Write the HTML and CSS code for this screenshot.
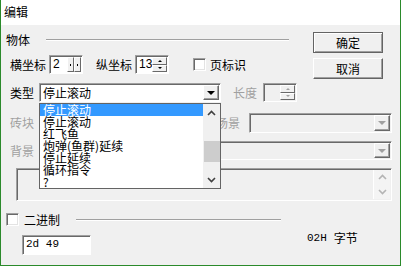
FILE: index.html
```html
<!DOCTYPE html>
<html lang="zh">

<head>
    <meta charset="UTF-8">
    <title>编辑</title>
    <link rel="stylesheet" href="styles.css">
</head>

<body>
    <div class="win">
        <div class="title">编辑</div>
        <div class="client">

            <div class="top">
                <div class="fields">
                    <div class="row row-group">
                        <span class="lbl">物体</span>
                        <span class="rule"></span>
                    </div>

                    <div class="row row-pos">
                        <span class="lbl">横坐标</span>
                        <div class="spin spin-x">
                            <span class="num">2</span>
                            <span class="hbtn"><i></i></span>
                            <span class="hbtn"><i></i></span>
                        </div>
                        <span class="lbl lbl-y">纵坐标</span>
                        <div class="spin spin-y">
                            <span class="num">13</span>
                            <span class="vbtns">
                                <span class="up"><i class="tri-up"></i></span>
                                <span class="down"><i class="tri-down"></i></span>
                            </span>
                        </div>
                        <span class="check check-page"></span>
                        <span class="lbl lbl-page">页标识</span>
                    </div>

                    <div class="row row-type">
                        <span class="lbl">类型</span>
                        <div class="combo combo-type">
                            <span class="val">停止滚动</span>
                            <span class="drop"><i class="tri-down big"></i></span>

                            <div class="list">
                                <div class="items">
                                    <div class="item sel">停止滚动</div>
                                    <div class="item">停止滚动</div>
                                    <div class="item">红飞鱼</div>
                                    <div class="item">炮弹(鱼群)延续</div>
                                    <div class="item">停止延续</div>
                                    <div class="item">循环指令</div>
                                    <div class="item">?</div>
                                </div>
                                <div class="sbar">
                                    <span class="sb-btn">
                                        <svg width="9" height="6" viewBox="0 0 9 6"><polyline points="1,5 4.5,1.5 8,5" fill="none" stroke="#404040" stroke-width="1.6"/></svg>
                                    </span>
                                    <span class="sb-track"><span class="thumb"></span></span>
                                    <span class="sb-btn">
                                        <svg width="9" height="6" viewBox="0 0 9 6"><polyline points="1,1 4.5,4.5 8,1" fill="none" stroke="#404040" stroke-width="1.6"/></svg>
                                    </span>
                                </div>
                            </div>
                        </div>
                        <span class="lbl off lbl-len">长度</span>
                        <div class="spin spin-len">
                            <span class="num"></span>
                            <span class="vbtns">
                                <span class="up"><i class="tri-up off"></i></span>
                                <span class="down"><i class="tri-down off"></i></span>
                            </span>
                        </div>
                    </div>
                </div>

                <div class="actions">
                    <button class="btn btn-default">确定</button>
                    <button class="btn">取消</button>
                </div>
            </div>

            <div class="row row-brick">
                <span class="lbl off">砖块</span>
                <div class="combo combo-off combo-brick"><span class="val"></span><span class="drop"><i class="tri-down big off"></i></span></div>
                <span class="lbl off lbl-scene">场景</span>
                <div class="combo combo-off combo-scene"><span class="val"></span><span class="drop"><i class="tri-down big off"></i></span></div>
            </div>

            <div class="row row-bg">
                <span class="lbl off">背景</span>
                <div class="combo combo-off combo-bg"><span class="val"></span><span class="drop"><i class="tri-down big off"></i></span></div>
            </div>

            <div class="row row-memo">
                <div class="memo">
                    <span class="memo-text"></span>
                    <span class="memo-bar">
                        <span class="mb-btn">
                            <svg width="9" height="6" viewBox="0 0 9 6"><polyline points="1,5 4.5,1.5 8,5" fill="none" stroke="#b4b4b4" stroke-width="1.6"/></svg>
                        </span>
                        <span class="mb-btn">
                            <svg width="9" height="6" viewBox="0 0 9 6"><polyline points="1,1 4.5,4.5 8,1" fill="none" stroke="#b4b4b4" stroke-width="1.6"/></svg>
                        </span>
                    </span>
                </div>
            </div>

            <div class="row row-bin">
                <span class="check"></span>
                <span class="lbl lbl-bin">二进制</span>
                <span class="rule rule-bin"></span>
            </div>

            <div class="row row-hex">
                <div class="hex">2d 49</div>
                <div class="size"><span class="mono">02H</span><span class="unit">字节</span></div>
            </div>

        </div>
    </div>
</body>

</html>
```

FILE: styles.css
```css
* {
    margin: 0;
    padding: 0;
    box-sizing: border-box;
}

body {
    font-family: "Noto Sans CJK SC", "Liberation Sans", sans-serif;
    font-size: 12px;
    color: #000;
    background: #fff;
}

.win {
    width: 401px;
    height: 266px;
    border: 1px solid #2b8a2b;
    border-top: none;
    display: flex;
    flex-direction: column;
}

.title {
    height: 25px;
    line-height: 23px;
    padding-left: 3px;
    background: #fff;
}

.client {
    flex: 1;
    background: #f0f0f0;
}

.row {
    display: flex;
    align-items: center;
}

.lbl {
    line-height: 14px;
    white-space: nowrap;
}

.off {
    color: #a0a0a0;
}

.rule {
    flex: 1;
    height: 2px;
    border-top: 1px solid #a0a0a0;
    border-bottom: 1px solid #fff;
}

/* top block: fields + buttons */

.top {
    display: flex;
}

.fields {
    width: 305px;
    padding-top: 5px;
}

.row-group {
    height: 20px;
    padding-left: 5px;
}

.row-group .rule {
    margin-left: 16px;
    margin-right: 17px;
}

.actions {
    display: flex;
    flex-direction: column;
    gap: 5px;
    margin-top: 7px;
    margin-left: 7px;
}

.btn {
    width: 70px;
    height: 21px;
    font-family: "Noto Sans CJK SC", sans-serif;
    font-size: 12px;
    line-height: 12px;
    background: #f0f0f0;
    border: 1px solid;
    border-color: #fff #646464 #646464 #fff;
    box-shadow: inset -1px -1px 0 #a0a0a0;
}

.btn-default {
    border-color: #646464;
    box-shadow: inset 1px 1px 0 #fff, inset -1px -1px 0 #a0a0a0;
}

.row-pos {
    margin-top: 5px;
    height: 19px;
    padding-left: 9px;
}

.spin {
    display: flex;
    width: 34px;
    height: 19px;
    margin-left: 3px;
    border: 1px solid;
    border-color: #a0a0a0 #fff #fff #a0a0a0;
    box-shadow: inset 1px 1px 0 #696969;
    background: #fff;
    padding: 1px 1px 1px 1px;
}

.num {
    flex: 1;
    font-family: "Liberation Sans", sans-serif;
    font-size: 12px;
    line-height: 15px;
    padding-left: 2px;
}

.hbtn {
    width: 7px;
    background: #f0f0f0;
    border: 1px solid;
    border-color: #fff #696969 #696969 #fff;
    display: flex;
    align-items: center;
    justify-content: center;
}

.hbtn i {
    width: 1px;
    height: 2px;
    background: #000;
}

.vbtns {
    width: 15px;
    display: flex;
    flex-direction: column;
}

.vbtns span {
    flex: 1;
    background: #f0f0f0;
    border: 1px solid;
    border-color: #fff #696969 #696969 #fff;
    display: flex;
    align-items: center;
    justify-content: center;
}

.tri-up,
.tri-down {
    width: 0;
    height: 0;
    border-left: 2px solid transparent;
    border-right: 2px solid transparent;
}

.tri-up {
    border-bottom: 2px solid #000;
}

.tri-down {
    border-top: 2px solid #000;
}

.tri-down.big {
    border-left-width: 4px;
    border-right-width: 4px;
    border-top-width: 4px;
}

.tri-up.off {
    border-bottom-color: #a0a0a0;
}

.tri-down.off {
    border-top-color: #a0a0a0;
}

.lbl-y {
    margin-left: 13px;
}

.check {
    width: 13px;
    height: 13px;
    background: #fff;
    border: 1px solid;
    border-color: #a0a0a0 #fff #fff #a0a0a0;
    box-shadow: inset 1px 1px 0 #696969, inset -1px -1px 0 #e3e3e3;
}

.check-page {
    margin-left: 24px;
}

.lbl-page {
    margin-left: 4px;
}

/* combos */

.row-type {
    margin-top: 9px;
    height: 19px;
    padding-left: 9px;
}

.combo {
    position: relative;
    display: flex;
    height: 19px;
    margin-left: 5px;
    border: 1px solid;
    border-color: #a0a0a0 #fff #fff #a0a0a0;
    box-shadow: inset 1px 1px 0 #696969;
    background: #fff;
    padding: 1px;
}

.combo .val {
    flex: 1;
    line-height: 15px;
    padding-left: 2px;
}

.drop {
    width: 16px;
    background: #f0f0f0;
    border: 1px solid;
    border-color: #fff #696969 #696969 #fff;
    box-shadow: inset -1px -1px 0 #a0a0a0;
    display: flex;
    align-items: center;
    justify-content: center;
}

.combo-type {
    width: 182px;
}

.combo-off {
    background: #f0f0f0;
}

.lbl-len {
    margin-left: 12px;
}

.spin-len {
    margin-left: 6px;
    background: #f0f0f0;
}

/* open dropdown list */

.list {
    position: absolute;
    left: -1px;
    top: 19px;
    width: 182px;
    height: 86px;
    border: 1px solid #646464;
    background: #fff;
    display: flex;
    z-index: 5;
}

.items {
    flex: 1;
}

.item {
    height: 12px;
    line-height: 12px;
    padding-left: 3px;
    white-space: nowrap;
}

.item.sel {
    background: #3399ff;
    color: #fff;
}

.sbar {
    width: 17px;
    background: #f0f0f0;
    display: flex;
    flex-direction: column;
}

.sb-btn {
    height: 17px;
    display: flex;
    align-items: center;
    justify-content: center;
}

.sb-track {
    flex: 1;
    padding-top: 20px;
    padding-left: 1px;
}

.thumb {
    display: block;
    height: 21px;
    background: #cdcdcd;
}

/* lower rows */

.row-brick {
    margin-top: 11px;
    height: 20px;
    padding-left: 9px;
}

.combo-brick {
    height: 20px;
    width: 161px;
}

.lbl-scene {
    margin-left: 16px;
}

.combo-scene {
    height: 20px;
    width: 143px;
    margin-left: 9px;
}

.row-bg {
    margin-top: 8px;
    height: 19px;
    padding-left: 9px;
}

.combo-bg {
    width: 353px;
}

.row-memo {
    margin-top: 8px;
    padding-left: 15px;
}

.memo {
    display: flex;
    width: 376px;
    height: 33px;
    border: 1px solid;
    border-color: #a0a0a0 #fff #fff #a0a0a0;
    box-shadow: inset 1px 1px 0 #696969;
    padding: 1px 1px 1px 1px;
}

.memo-text {
    flex: 1;
}

.memo-bar {
    width: 17px;
    display: flex;
    flex-direction: column;
    justify-content: space-between;
    background: #f4f4f4;
    border-left: 1px solid #fff;
}

.mb-btn {
    height: 14px;
    display: flex;
    align-items: center;
    justify-content: center;
}

.row-bin {
    margin-top: 12px;
    height: 13px;
    padding-left: 5px;
}

.lbl-bin {
    margin-left: 5px;
}

.rule-bin {
    flex: none;
    width: 205px;
    margin-left: 16px;
}

.row-hex {
    margin-top: 9px;
    padding-left: 21px;
    align-items: flex-start;
}

.hex {
    width: 69px;
    height: 20px;
    border: 1px solid;
    border-color: #a0a0a0 #fff #fff #a0a0a0;
    box-shadow: inset 1px 1px 0 #696969;
    background: #fff;
    padding-left: 3px;
    font-family: "Liberation Mono", monospace;
    font-size: 11px;
    line-height: 17px;
}

.size {
    display: flex;
    align-items: center;
    margin-left: 216px;
    margin-top: -4px;
    line-height: 14px;
}

.mono {
    font-family: "Liberation Mono", monospace;
    font-size: 11px;
}

.unit {
    margin-left: 7px;
}
```
